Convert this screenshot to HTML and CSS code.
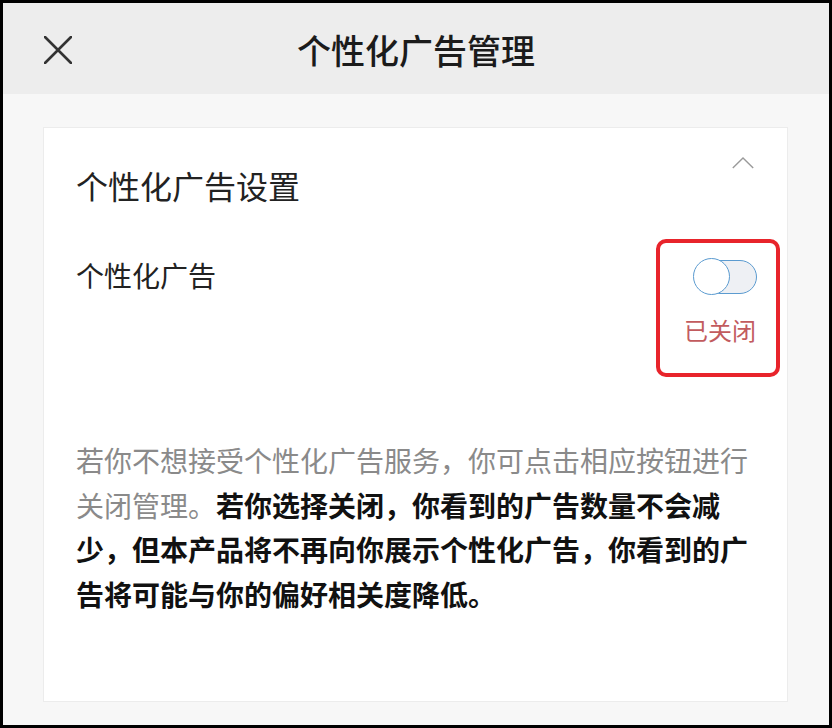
FILE: index.html
```html
<!DOCTYPE html>
<html lang="zh-CN">
<head>
<meta charset="utf-8">
<title>个性化广告管理</title>
<link rel="stylesheet" href="styles.css">
</head>
<body>
<div class="frame">
  <header class="topbar">
    <svg class="close" width="28" height="28" viewBox="0 0 28 28" aria-hidden="true">
      <path d="M1 1 L27 27 M27 1 L1 27" stroke="#333" stroke-width="2.6" stroke-linecap="round" fill="none"/>
    </svg>
    <h1 class="title">个性化广告管理</h1>
  </header>
  <main class="content">
    <section class="card">
      <div class="card-head">
        <h2 class="card-title">个性化广告设置</h2>
        <svg class="chevron" width="22" height="12" viewBox="0 0 22 12" aria-hidden="true">
          <polyline points="0.8,11 11,1 21.2,11" stroke="#9a9a9a" stroke-width="1.4" fill="none"/>
        </svg>
      </div>
      <div class="setting-row">
        <span class="setting-label">个性化广告</span>
        <div class="toggle-box">
          <div class="switch"><span class="knob"></span></div>
          <span class="state">已关闭</span>
        </div>
      </div>
      <p class="desc">若你不想接受个性化广告服务，你可点击相应按钮进行关闭管理。<strong>若你选择关闭，你看到的广告数量不会减少，但本产品将不再向你展示个性化广告，你看到的广告将可能与你的偏好相关度降低。</strong></p>
    </section>
  </main>
</div>
</body>
</html>
```
FILE: styles.css
```css
html, body {
  margin: 0;
  padding: 0;
  background: #000;
}
body {
  font-family: "Noto Sans CJK SC", "Noto Sans", sans-serif;
}
.frame {
  width: 832px;
  height: 728px;
  box-sizing: border-box;
  border: 3px solid #000;
  display: flex;
  flex-direction: column;
  background: #f7f7f7;
}
.topbar {
  height: 91px;
  flex: none;
  background: #ededed;
  position: relative;
  display: flex;
  align-items: center;
  justify-content: center;
}
.close {
  position: absolute;
  left: 41px;
  top: 33px;
}
.title {
  margin: 0;
  font-size: 34px;
  font-weight: 500;
  color: #1b1b1b;
  line-height: 40px;
  padding-top: 3px;
  letter-spacing: 0;
}
.content {
  flex: 1;
  display: flex;
  padding: 33px 41px 23px 40px;
  background: #f7f7f7;
}
.card {
  flex: 1;
  background: #fff;
  border: 1px solid #ececec;
  padding: 0 33px 0 32px;
  display: flex;
  flex-direction: column;
}
.card-head {
  display: flex;
  justify-content: space-between;
  align-items: flex-start;
  padding-top: 37px;
}
.card-title {
  margin: 0;
  font-size: 32px;
  font-weight: 400;
  line-height: 40px;
  color: #222;
}
.chevron {
  margin-top: -8px;
  margin-right: 0;
}
.setting-row {
  display: flex;
  justify-content: space-between;
  align-items: flex-start;
  margin-top: 34px;
}
.setting-label {
  font-size: 28px;
  line-height: 40px;
  margin-top: 16px;
  color: #222;
}
.toggle-box {
  width: 116px;
  height: 115px;
  border: 4px solid #e8242b;
  border-radius: 10px;
  margin-right: -26px;
  display: flex;
  flex-direction: column;
  align-items: center;
  padding-top: 15px;
  box-sizing: content-box;
}
.switch {
  position: relative;
  width: 64px;
  height: 38px;
  margin-left: 14px;
}
.switch::before {
  content: "";
  position: absolute;
  left: 10px;
  right: 0;
  top: 2px;
  bottom: 2px;
  border: 1.5px solid #5b9bd0;
  background: #eef0f4;
  border-radius: 17px;
}
.knob {
  position: absolute;
  left: 0;
  top: 0;
  width: 35px;
  height: 35px;
  border: 1.5px solid #5b9bd0;
  border-radius: 50%;
  background: #fff;
}
.state {
  margin-top: 19px;
  margin-left: 4px;
  font-size: 24px;
  line-height: 30px;
  color: #c25b5e;
}
.desc {
  margin: 61px 0 0;
  font-size: 28px;
  line-height: 44.6px;
  color: #8a8a8a;
}
.desc strong {
  color: #111;
  font-weight: 700;
}
```
